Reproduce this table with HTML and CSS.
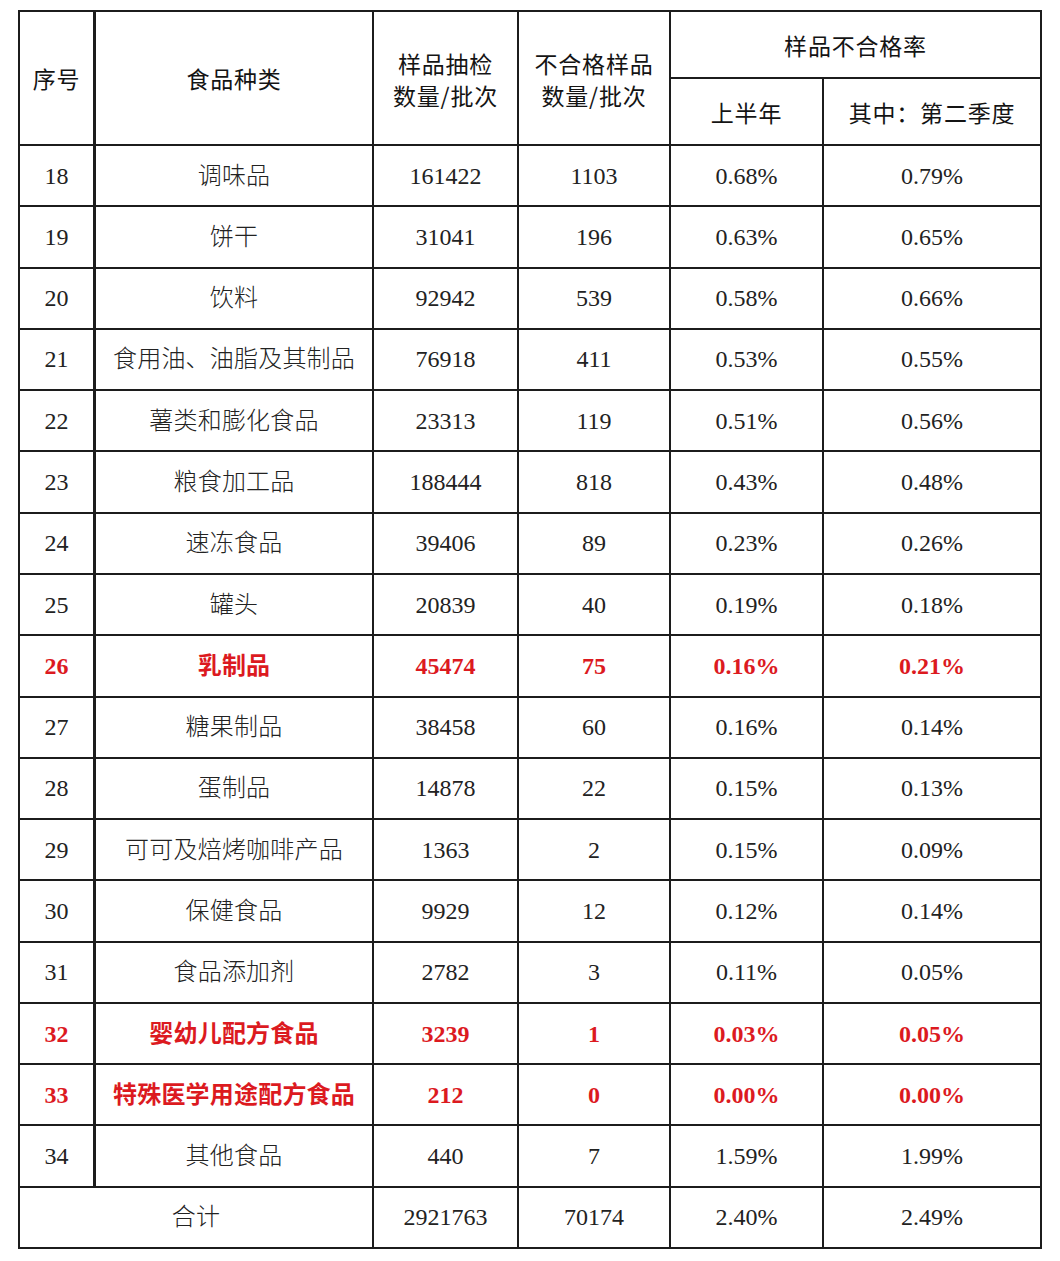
FILE: index.html
```html
<!DOCTYPE html>
<html lang="zh-CN">
<head>
<meta charset="utf-8">
<title>样品不合格率</title>
<link rel="stylesheet" href="styles.css">
</head>
<body>
<div class="sheet">
  <div class="c h r2 idx">序号</div>
  <div class="c h r2">食品种类</div>
  <div class="c h r2 two">样品抽检<br>数量/批次</div>
  <div class="c h r2 two">不合格样品<br>数量/批次</div>
  <div class="c h s2 top">样品不合格率</div>
  <div class="c h sub">上半年</div>
  <div class="c h sub">其中：第二季度</div>

  <div class="c idx">18</div><div class="c zh">调味品</div><div class="c">161422</div><div class="c">1103</div><div class="c">0.68%</div><div class="c">0.79%</div>
  <div class="c idx">19</div><div class="c zh">饼干</div><div class="c">31041</div><div class="c">196</div><div class="c">0.63%</div><div class="c">0.65%</div>
  <div class="c idx">20</div><div class="c zh">饮料</div><div class="c">92942</div><div class="c">539</div><div class="c">0.58%</div><div class="c">0.66%</div>
  <div class="c idx">21</div><div class="c zh">食用油、油脂及其制品</div><div class="c">76918</div><div class="c">411</div><div class="c">0.53%</div><div class="c">0.55%</div>
  <div class="c idx">22</div><div class="c zh">薯类和膨化食品</div><div class="c">23313</div><div class="c">119</div><div class="c">0.51%</div><div class="c">0.56%</div>
  <div class="c idx">23</div><div class="c zh">粮食加工品</div><div class="c">188444</div><div class="c">818</div><div class="c">0.43%</div><div class="c">0.48%</div>
  <div class="c idx">24</div><div class="c zh">速冻食品</div><div class="c">39406</div><div class="c">89</div><div class="c">0.23%</div><div class="c">0.26%</div>
  <div class="c idx">25</div><div class="c zh">罐头</div><div class="c">20839</div><div class="c">40</div><div class="c">0.19%</div><div class="c">0.18%</div>
  <div class="c idx red">26</div><div class="c zh red">乳制品</div><div class="c red">45474</div><div class="c red">75</div><div class="c red">0.16%</div><div class="c red">0.21%</div>
  <div class="c idx">27</div><div class="c zh">糖果制品</div><div class="c">38458</div><div class="c">60</div><div class="c">0.16%</div><div class="c">0.14%</div>
  <div class="c idx">28</div><div class="c zh">蛋制品</div><div class="c">14878</div><div class="c">22</div><div class="c">0.15%</div><div class="c">0.13%</div>
  <div class="c idx">29</div><div class="c zh">可可及焙烤咖啡产品</div><div class="c">1363</div><div class="c">2</div><div class="c">0.15%</div><div class="c">0.09%</div>
  <div class="c idx">30</div><div class="c zh">保健食品</div><div class="c">9929</div><div class="c">12</div><div class="c">0.12%</div><div class="c">0.14%</div>
  <div class="c idx">31</div><div class="c zh">食品添加剂</div><div class="c">2782</div><div class="c">3</div><div class="c">0.11%</div><div class="c">0.05%</div>
  <div class="c idx red">32</div><div class="c zh red">婴幼儿配方食品</div><div class="c red">3239</div><div class="c red">1</div><div class="c red">0.03%</div><div class="c red">0.05%</div>
  <div class="c idx red">33</div><div class="c zh red">特殊医学用途配方食品</div><div class="c red">212</div><div class="c red">0</div><div class="c red">0.00%</div><div class="c red">0.00%</div>
  <div class="c idx">34</div><div class="c zh">其他食品</div><div class="c">440</div><div class="c">7</div><div class="c">1.59%</div><div class="c">1.99%</div>
  <div class="c zh s2">合计</div><div class="c">2921763</div><div class="c">70174</div><div class="c">2.40%</div><div class="c">2.49%</div>
</div>
</body>
</html>
```

FILE: styles.css
```css
html, body {
  margin: 0;
  padding: 0;
  background: #ffffff;
}

body {
  padding: 10px 0 0 18px;
}

.sheet {
  display: grid;
  width: 1024px;
  height: 1239px;
  box-sizing: border-box;
  padding: 2px;
  gap: 2px;
  background: #1c1c1c;
  grid-template-columns: 74px 276px 143px 150px 151px 216px;
  grid-template-rows: 65px 65px repeat(18, 1fr);
  font-family: "Liberation Serif", "Noto Sans CJK SC", serif;
  font-size: 24px;
  color: #222222;
}

.c {
  background: #ffffff;
  display: flex;
  align-items: center;
  justify-content: center;
  text-align: center;
  line-height: 32px;
  white-space: nowrap;
}

.idx {
  border-right: 1px solid #1c1c1c;
}

.zh {
  font-weight: 300;
  letter-spacing: 0.2px;
}

.h {
  font-family: "Noto Sans CJK SC", sans-serif;
  font-size: 23px;
  font-weight: 400;
  color: #141414;
  letter-spacing: 0.8px;
}

.r2 {
  grid-row: span 2;
}

.s2 {
  grid-column: span 2;
}

.two {
  padding-top: 2px;
}

.red {
  color: #dc1a1f;
  font-weight: 700;
}
```
